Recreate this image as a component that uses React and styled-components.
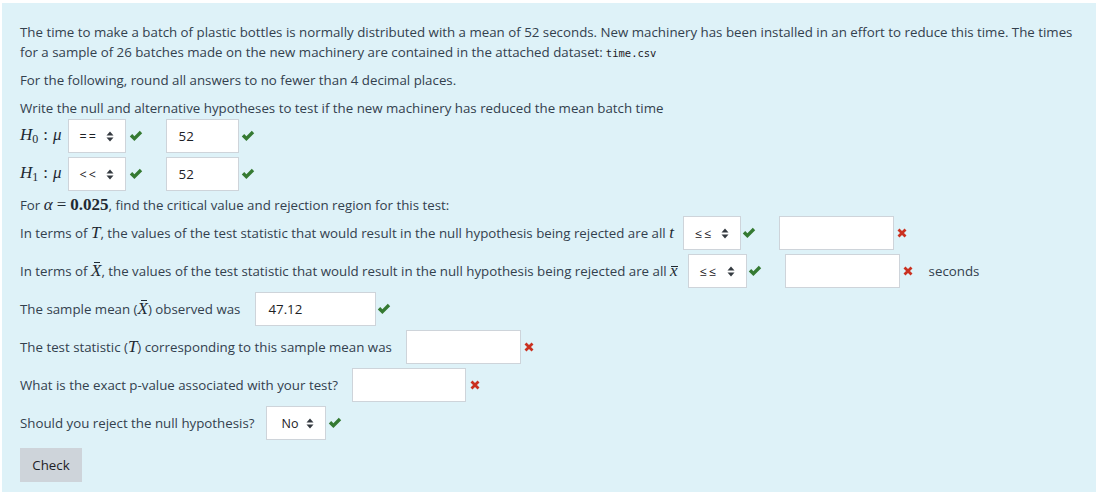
import React from 'react'
import styled, { createGlobalStyle } from 'styled-components'

const Global = createGlobalStyle`
  html, body { margin: 0; padding: 0; background: #fff; }
  body {
    font-family: "Open Sans", "Noto Sans", sans-serif;
    font-size: 13.3px;
    color: #33414e;
  }
`

const Panel = styled.div`
  margin: 3px 0 0 2px;
  width: 1094px;
  box-sizing: border-box;
  padding: 19px 12px 10px 18px;
  background: #def2f8;
`

const Para = styled.p`
  margin: 0 0 ${(p) => (p.$mb === undefined ? 8 : p.$mb)}px;
  line-height: 20px;
`

const Mono = styled.code`
  display: inline-block;
  margin-left: 3px;
  font-family: "DejaVu Sans Mono", "Liberation Mono", monospace;
  font-size: 10.5px;
  line-height: 14px;
  color: #1d2125;
`

const Row = styled.div`
  display: flex;
  align-items: center;
  height: 34px;
  margin-bottom: ${(p) => (p.$mb === undefined ? 4 : p.$mb)}px;
  white-space: nowrap;
`

const Label = styled.span`
  margin-right: ${(p) => (p.$gap === undefined ? 14 : p.$gap)}px;
`

const M = styled.span`
  font-family: "Liberation Serif", "DejaVu Serif", serif;
  font-style: ${(p) => (p.$up ? 'normal' : 'italic')};
  font-weight: ${(p) => (p.$bold ? 700 : 400)};
  font-size: 17px;
  color: #1f2a33;
  margin: 0 ${(p) => p.$sp || 0}px;
`

const Sub = styled.sub`
  font-style: normal;
  font-size: 12px;
  vertical-align: -3px;
`

const Bar = styled.span`
  display: inline-block;
  position: relative;
  &::before {
    content: '';
    position: absolute;
    left: ${(p) => (p.$l === undefined ? 3 : p.$l)}px;
    right: ${(p) => (p.$r === undefined ? 1 : p.$r)}px;
    top: ${(p) => (p.$t === undefined ? 1 : p.$t)}px;
    height: 1px;
    background: currentColor;
  }
`

const Select = styled.div`
  display: flex;
  align-items: center;
  justify-content: space-between;
  box-sizing: border-box;
  width: ${(p) => p.$w || 58}px;
  height: 34px;
  padding: 0 11px 0 ${(p) => p.$pl || 11}px;
  background: #fff;
  border: 1px solid #ced4da;
  color: #1d2125;
  font-size: 12.5px;
  letter-spacing: ${(p) => (p.$ls ? 2 : 0)}px;
`

const Field = styled.div`
  display: flex;
  align-items: center;
  box-sizing: border-box;
  width: ${(p) => p.$w}px;
  height: 34px;
  padding: 0 12px;
  margin-left: ${(p) => p.$ml || 0}px;
  background: #fff;
  border: 1px solid #ced4da;
  color: #1d2125;
`

const IconBox = styled.span`
  display: inline-flex;
  margin-left: ${(p) => p.$ml || 0}px;
`

const Unit = styled.span`
  margin-left: 16px;
`

const CheckButton = styled.button`
  height: 34px;
  width: 62px;
  border: none;
  border-radius: 0;
  background: #ced4da;
  color: #1d2125;
  font-family: inherit;
  font-size: 13.3px;
  padding: 0;
`

const Caret = () => (
  <svg width="8" height="11" viewBox="0 0 8 11">
    <path d="M4 0.5 L7.5 4.5 H0.5 Z M4 10.5 L7.5 6.5 H0.5 Z" fill="#343a40" />
  </svg>
)

const Tick = ({ ml }) => (
  <IconBox $ml={ml}>
    <svg width="14" height="12" viewBox="0 0 14 12">
      <path d="M0.8 6.4 L3.2 4 L5.4 6.3 L10.8 0.8 L13.2 3.2 L5.4 11 Z" fill="#357a32" />
    </svg>
  </IconBox>
)

const Cross = ({ ml }) => (
  <IconBox $ml={ml}>
    <svg width="10" height="10" viewBox="0 0 10 10">
      <path d="M1.5 1.5 L8.5 8.5 M8.5 1.5 L1.5 8.5" stroke="#ca3120" strokeWidth="2.8" />
    </svg>
  </IconBox>
)

const Sel = ({ children, ...rest }) => (
  <Select {...rest}>
    <span>{children}</span>
    <Caret />
  </Select>
)

const App = () => (
  <>
    <Global />
    <Panel>
      <Para>
        The time to make a batch of plastic bottles is normally distributed with a mean of 52 seconds. New machinery has been installed in an effort to reduce this time. The times for a sample of 26 batches made on the new machinery are contained in the attached dataset:
        <Mono>time.csv</Mono>
      </Para>
      <Para>For the following, round all answers to no fewer than 4 decimal places.</Para>
      <Para $mb={1}>Write the null and alternative hypotheses to test if the new machinery has reduced the mean batch time</Para>
      <Row>
        <Label $gap={6}>
          <M>H<Sub>0</Sub></M><M $up $sp={5}>:</M><M>μ</M>
        </Label>
        <Sel $ls>==</Sel>
        <Tick ml={3} />
        <Field $w={73} $ml={23}>52</Field>
        <Tick ml={2} />
      </Row>
      <Row>
        <Label $gap={6}>
          <M>H<Sub>1</Sub></M><M $up $sp={5}>:</M><M>μ</M>
        </Label>
        <Sel $ls>&lt;&lt;</Sel>
        <Tick ml={3} />
        <Field $w={73} $ml={23}>52</Field>
        <Tick ml={2} />
      </Row>
      <Para $mb={1}>
        For <M>α</M><M $up $sp={4}>=</M><M $up $bold>0.025</M>, find the critical value and rejection region for this test:
      </Para>
      <Row>
        <Label $gap={9}>
          In terms of <M>T</M>, the values of the test statistic that would result in the null hypothesis being rejected are all <M>t</M>
        </Label>
        <Sel $ls>≤≤</Sel>
        <Tick ml={1} />
        <Field $w={115} $ml={23} />
        <Cross ml={3} />
      </Row>
      <Row>
        <Label $gap={10}>
          In terms of <M><Bar>X</Bar></M>, the values of the test statistic that would result in the null hypothesis being rejected are all <M><Bar $l={1} $r={0} $t={5}>x</Bar></M>
        </Label>
        <Sel $ls $w={59}>≤≤</Sel>
        <Tick ml={1} />
        <Field $w={115} $ml={23} />
        <Cross ml={3} />
        <Unit>seconds</Unit>
      </Row>
      <Row>
        <Label $gap={15}>
          The sample mean (<M><Bar>X</Bar></M>) observed was
        </Label>
        <Field $w={121}>47.12</Field>
        <Tick ml={1} />
      </Row>
      <Row>
        <Label>
          The test statistic (<M>T</M>) corresponding to this sample mean was
        </Label>
        <Field $w={115} />
        <Cross ml={3} />
      </Row>
      <Row>
        <Label>What is the exact p-value associated with your test?</Label>
        <Field $w={114} />
        <Cross ml={4} />
      </Row>
      <Row $mb={8}>
        <Label $gap={12}>Should you reject the null hypothesis?</Label>
        <Sel $w={60} $pl={14}>No</Sel>
        <Tick ml={2} />
      </Row>
      <CheckButton>Check</CheckButton>
    </Panel>
  </>
)

export default App
